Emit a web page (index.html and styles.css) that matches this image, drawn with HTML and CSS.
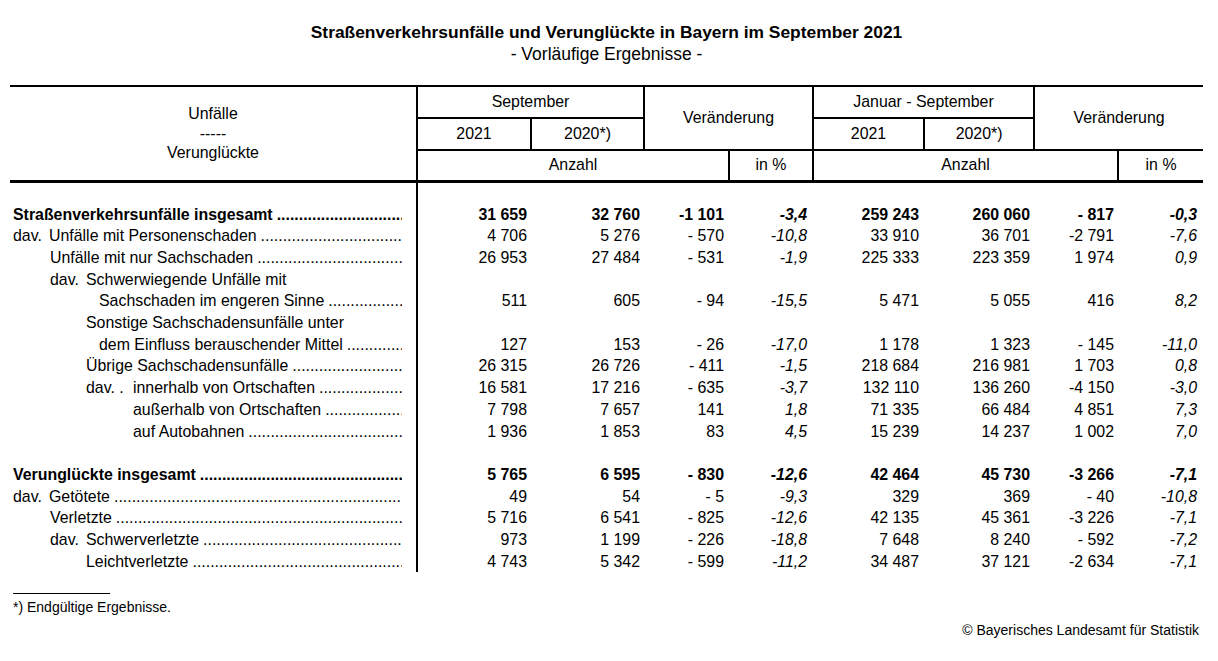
FILE: index.html
```html
<!DOCTYPE html>
<html lang="de">
<head>
<meta charset="utf-8">
<title>Straßenverkehrsunfälle und Verunglückte in Bayern im September 2021</title>
<link rel="stylesheet" href="styles.css">
</head>
<body>
<div class="page">
  <h1 class="title">Straßenverkehrsunfälle und Verunglückte in Bayern im September 2021</h1>
  <p class="subtitle">- Vorläufige Ergebnisse -</p>

  <table class="stats">
    <colgroup>
      <col class="c-label">
      <col class="c-n1"><col class="c-n2"><col class="c-d1"><col class="c-p1">
      <col class="c-n3"><col class="c-n4"><col class="c-d2"><col class="c-p2">
    </colgroup>
    <thead>
      <tr class="h1">
        <th rowspan="3" class="h-label">Unfälle<br>-----<br>Verunglückte</th>
        <th colspan="2">September</th>
        <th colspan="2" rowspan="2">Veränderung</th>
        <th colspan="2">Januar - September</th>
        <th colspan="2" rowspan="2">Veränderung</th>
      </tr>
      <tr class="h2">
        <th>2021</th><th>2020*)</th>
        <th>2021</th><th>2020*)</th>
      </tr>
      <tr class="h3">
        <th colspan="3">Anzahl</th><th>in %</th>
        <th colspan="3">Anzahl</th><th>in %</th>
      </tr>
    </thead>
    <tbody>
      <tr class="gap"><td></td><td colspan="8"></td></tr>

      <tr class="sum">
        <td><div class="lbl l0"><span class="txt">Straßenverkehrsunfälle insgesamt</span><span class="dots"></span></div></td>
        <td>31 659</td><td>32 760</td><td>-1 101</td><td class="pct">-3,4</td>
        <td>259 243</td><td>260 060</td><td>- 817</td><td class="pct">-0,3</td>
      </tr>
      <tr>
        <td><div class="lbl l0"><span class="pre">dav.</span><span class="txt">Unfälle mit Personenschaden</span><span class="dots"></span></div></td>
        <td>4 706</td><td>5 276</td><td>- 570</td><td class="pct">-10,8</td>
        <td>33 910</td><td>36 701</td><td>-2 791</td><td class="pct">-7,6</td>
      </tr>
      <tr>
        <td><div class="lbl l1"><span class="txt">Unfälle mit nur Sachschaden</span><span class="dots"></span></div></td>
        <td>26 953</td><td>27 484</td><td>- 531</td><td class="pct">-1,9</td>
        <td>225 333</td><td>223 359</td><td>1 974</td><td class="pct">0,9</td>
      </tr>
      <tr>
        <td><div class="lbl l1"><span class="pre">dav.</span><span class="txt">Schwerwiegende Unfälle mit</span></div></td>
        <td></td><td></td><td></td><td></td><td></td><td></td><td></td><td></td>
      </tr>
      <tr>
        <td><div class="lbl l3"><span class="txt">Sachschaden im engeren Sinne</span><span class="dots"></span></div></td>
        <td>511</td><td>605</td><td>- 94</td><td class="pct">-15,5</td>
        <td>5 471</td><td>5 055</td><td>416</td><td class="pct">8,2</td>
      </tr>
      <tr>
        <td><div class="lbl l2"><span class="txt">Sonstige Sachschadensunfälle unter</span></div></td>
        <td></td><td></td><td></td><td></td><td></td><td></td><td></td><td></td>
      </tr>
      <tr>
        <td><div class="lbl l3"><span class="txt">dem Einfluss berauschender Mittel</span><span class="dots"></span></div></td>
        <td>127</td><td>153</td><td>- 26</td><td class="pct">-17,0</td>
        <td>1 178</td><td>1 323</td><td>- 145</td><td class="pct">-11,0</td>
      </tr>
      <tr>
        <td><div class="lbl l2"><span class="txt">Übrige Sachschadensunfälle</span><span class="dots"></span></div></td>
        <td>26 315</td><td>26 726</td><td>- 411</td><td class="pct">-1,5</td>
        <td>218 684</td><td>216 981</td><td>1 703</td><td class="pct">0,8</td>
      </tr>
      <tr>
        <td><div class="lbl l2"><span class="pre pre-wide">dav. .</span><span class="txt">innerhalb von Ortschaften</span><span class="dots"></span></div></td>
        <td>16 581</td><td>17 216</td><td>- 635</td><td class="pct">-3,7</td>
        <td>132 110</td><td>136 260</td><td>-4 150</td><td class="pct">-3,0</td>
      </tr>
      <tr>
        <td><div class="lbl l4"><span class="txt">außerhalb von Ortschaften</span><span class="dots"></span></div></td>
        <td>7 798</td><td>7 657</td><td>141</td><td class="pct">1,8</td>
        <td>71 335</td><td>66 484</td><td>4 851</td><td class="pct">7,3</td>
      </tr>
      <tr>
        <td><div class="lbl l4"><span class="txt">auf Autobahnen</span><span class="dots"></span></div></td>
        <td>1 936</td><td>1 853</td><td>83</td><td class="pct">4,5</td>
        <td>15 239</td><td>14 237</td><td>1 002</td><td class="pct">7,0</td>
      </tr>

      <tr class="blank"><td></td><td colspan="8"></td></tr>

      <tr class="sum">
        <td><div class="lbl l0"><span class="txt">Verunglückte insgesamt</span><span class="dots"></span></div></td>
        <td>5 765</td><td>6 595</td><td>- 830</td><td class="pct">-12,6</td>
        <td>42 464</td><td>45 730</td><td>-3 266</td><td class="pct">-7,1</td>
      </tr>
      <tr>
        <td><div class="lbl l0"><span class="pre">dav.</span><span class="txt">Getötete</span><span class="dots"></span></div></td>
        <td>49</td><td>54</td><td>- 5</td><td class="pct">-9,3</td>
        <td>329</td><td>369</td><td>- 40</td><td class="pct">-10,8</td>
      </tr>
      <tr>
        <td><div class="lbl l1"><span class="txt">Verletzte</span><span class="dots"></span></div></td>
        <td>5 716</td><td>6 541</td><td>- 825</td><td class="pct">-12,6</td>
        <td>42 135</td><td>45 361</td><td>-3 226</td><td class="pct">-7,1</td>
      </tr>
      <tr>
        <td><div class="lbl l1"><span class="pre">dav.</span><span class="txt">Schwerverletzte</span><span class="dots"></span></div></td>
        <td>973</td><td>1 199</td><td>- 226</td><td class="pct">-18,8</td>
        <td>7 648</td><td>8 240</td><td>- 592</td><td class="pct">-7,2</td>
      </tr>
      <tr>
        <td><div class="lbl l2"><span class="txt">Leichtverletzte</span><span class="dots"></span></div></td>
        <td>4 743</td><td>5 342</td><td>- 599</td><td class="pct">-11,2</td>
        <td>34 487</td><td>37 121</td><td>-2 634</td><td class="pct">-7,1</td>
      </tr>
    </tbody>
  </table>

  <div class="footnote">
    <div class="fn-rule"></div>
    <p class="fn-text">*) Endgültige Ergebnisse.</p>
  </div>
  <p class="copyright">© Bayerisches Landesamt für Statistik</p>
</div>
</body>
</html>
```

FILE: styles.css
```css
html, body {
  margin: 0;
  padding: 0;
  background: #fff;
}

body {
  font-family: "Liberation Sans", Arial, "DejaVu Sans", sans-serif;
  color: #000;
}

.page {
  width: 1193px;
  padding: 21px 0 0 10px;
}

.title {
  margin: 0;
  font-size: 17.4px;
  line-height: 22px;
  font-weight: bold;
  text-align: center;
}

.subtitle {
  margin: 0;
  font-size: 17.5px;
  line-height: 22px;
  text-align: center;
}

/* ---------- table ---------- */
.stats {
  margin-top: 20px;
  width: 1193px;
  table-layout: fixed;
  border-collapse: collapse;
  font-size: 15.9px;
}

.c-label { width: 407px; }
.c-n1 { width: 114px; }
.c-n2 { width: 113px; }
.c-d1 { width: 85px; }
.c-p1 { width: 84px; }
.c-n3 { width: 111px; }
.c-n4 { width: 110px; }
.c-d2 { width: 84px; }
.c-p2 { width: 85px; }

.stats th {
  font-weight: normal;
  text-align: center;
  padding: 0;
  border: 2px solid #000;
  line-height: 18px;
}

.stats thead tr.h1 th { border-top-width: 2px; }
.stats thead tr.h3 th { border-bottom-width: 3px; }
.stats thead .h-label { border-left: 0; border-bottom-width: 3px; line-height: 19.5px; }
.stats thead tr th:last-child { border-right: 0; }
.stats thead tr.h2 th:last-child { border-right: 2px solid #000; }

.stats tr.h1 { height: 32px; }
.stats tr.h2 { height: 32px; }
.stats tr.h3 { height: 31px; }

.stats td {
  padding: 0 5px 0 0;
  height: 21.7px;
  line-height: 21.7px;
  text-align: right;
  white-space: nowrap;
  vertical-align: middle;
}

.stats tbody td:first-child {
  padding: 0 14px 0 0;
  text-align: left;
  border-right: 2px solid #000;
}

.stats tbody td:nth-child(2) { padding-right: 4px; }
.stats tbody td:nth-child(3) { padding-right: 4px; }
.stats tbody td:nth-child(4) { padding-right: 5px; }
.stats tbody td:nth-child(5) { padding-right: 6px; }
.stats tbody td:nth-child(6) { padding-right: 5px; }
.stats tbody td:nth-child(7) { padding-right: 4px; }
.stats tbody td:nth-child(8) { padding-right: 4px; }
.stats tbody td:nth-child(9) { padding-right: 6px; }

.stats tr.gap td { height: 21px; }

.pct { font-style: italic; }

.sum td { font-weight: bold; }

/* ---------- row labels ---------- */
.lbl {
  display: flex;
  align-items: baseline;
  overflow: hidden;
}

.l0 { padding-left: 3px; }
.l1 { padding-left: 40px; }
.l2 { padding-left: 76px; }
.l3 { padding-left: 89px; }
.l4 { padding-left: 123px; }

.pre {
  flex: none;
  width: 36px;
}

.pre-wide { width: 47px; }

.txt {
  flex: none;
}

.dots {
  flex: 1 1 auto;
  min-width: 0;
  overflow: hidden;
  white-space: nowrap;
  padding-left: 4px;
}

.dots::after {
  content: "....................................................................................................................";
}

/* ---------- footer ---------- */
.footnote {
  margin-top: 21px;
  padding-left: 3px;
}

.fn-rule {
  width: 97px;
  height: 1px;
  background: #000;
}

.fn-text {
  margin: 4px 0 0 0;
  font-size: 14px;
  line-height: 18px;
}

.copyright {
  margin: 5px 4px 0 0;
  font-size: 14px;
  line-height: 18px;
  text-align: right;
}
```
